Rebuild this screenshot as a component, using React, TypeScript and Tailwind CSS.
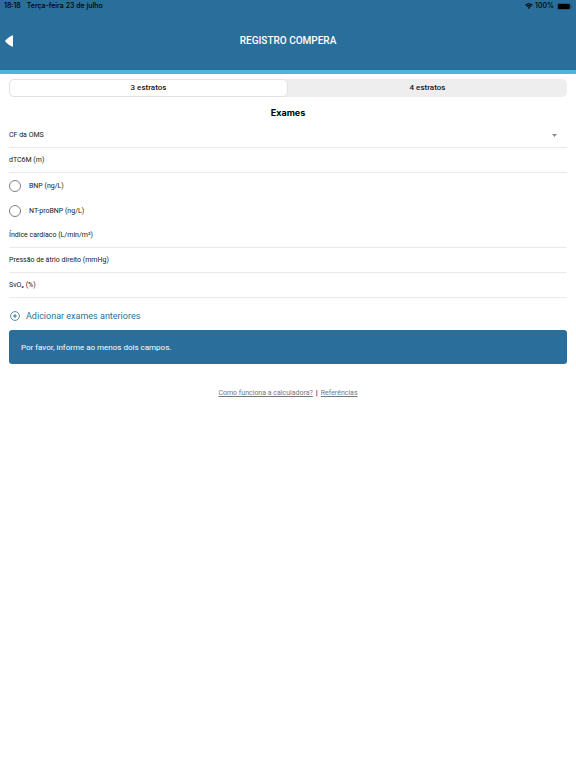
import React from "react";

function StatusBar() {
  return (
    <div className="flex h-3 items-center justify-between px-1 font-['Inter','Liberation_Sans',sans-serif] text-[7px] leading-3 font-medium text-black">
      <div className="flex gap-[6px]">
        <span>18:18</span>
        <span>Terça-feira 23 de julho</span>
      </div>
      <div className="flex items-center gap-[2px]">
        <svg className="h-[6px] w-2" viewBox="0 0 16 12" fill="none" stroke="currentColor" strokeWidth="2.2" aria-hidden="true">
          <path d="M1 4.6C5 .6 11 .6 15 4.6" />
          <path d="M3.8 7.4C6.3 5 9.7 5 12.2 7.4" />
          <path d="M5.6 9.2C7 8 9 8 10.4 9.2L8 11.8Z" fill="currentColor" stroke="none" />
        </svg>
        <span>100%</span>
        <svg className="ml-px h-[7px] w-[15px]" viewBox="0 0 15 7" aria-hidden="true">
          <rect x=".3" y=".3" width="13.2" height="6.4" rx="1.8" fill="none" stroke="#000" strokeOpacity=".45" strokeWidth=".5" />
          <rect x="1" y="1" width="11.8" height="5" rx="1.1" />
          <path d="M14.1 2.4C15 2.7 15 4.3 14.1 4.6Z" fillOpacity=".5" />
        </svg>
      </div>
    </div>
  );
}

function Field({ id, label }: { id: string; label: string }) {
  return (
    <div className="flex h-[25px] items-center gap-2 border-b border-[#e9e9e9]">
      <label htmlFor={id}>{label}</label>
      <input id={id} type="text" className="min-w-0 flex-1 bg-transparent outline-none" />
    </div>
  );
}

function Choice({ label }: { label: string }) {
  return (
    <label className="flex h-[25px] items-center gap-2">
      <input
        type="radio"
        name="peptideo"
        className="h-3 w-3 appearance-none rounded-full border border-[#808080] checked:bg-[#2a6f9b]"
      />
      <span>{label}</span>
    </label>
  );
}

export default function App() {
  return (
    <div className="min-h-screen bg-white font-['Roboto','Liberation_Sans',sans-serif] text-[#171717]">
      <header className="border-b-4 border-[#45b9d9] bg-[#2a6f9b]">
        <StatusBar />
        <div className="grid h-[58px] grid-cols-[1fr_auto_1fr] items-center px-[5px]">
          <button type="button" aria-label="Voltar" className="justify-self-start text-white">
            <svg className="block h-3 w-2" viewBox="0 0 8 12" fill="currentColor" aria-hidden="true">
              <path d="M7 .4Q8 0 8 1V11Q8 12 7 11.6Q4 10.5 .7 7Q-.3 6 .7 5Q4 1.5 7 .4Z" />
            </svg>
          </button>
          <h1 className="text-[10px] leading-4 font-medium text-white">REGISTRO COMPERA</h1>
        </div>
      </header>

      <main className="px-[9px] pt-[5px]">
        <div className="grid h-[18px] grid-cols-2 rounded-[5px] bg-[#eeeeee] text-[8px] font-medium">
          <button type="button" aria-pressed="true" className="rounded-[5px] border border-[#e2e2e2] bg-white">
            3 estratos
          </button>
          <button type="button" aria-pressed="false">4 estratos</button>
        </div>

        <h2 className="pt-2 pb-[3px] text-center font-['Inter','Liberation_Sans',sans-serif] text-[9px] leading-[15px] font-bold text-black">
          Exames
        </h2>

        <form className="text-[7px] leading-3">
          <div className="flex h-[25px] items-center border-b border-[#e9e9e9] pr-[10px]">
            <select aria-label="CF da OMS" className="min-w-0 flex-1 appearance-none bg-transparent outline-none">
              <option>CF da OMS</option>
            </select>
            <svg className="h-[3px] w-[5px] text-[#8b8b8b]" viewBox="0 0 5 3" fill="currentColor" aria-hidden="true">
              <path d="M0 0H5L2.5 3Z" />
            </svg>
          </div>
          <Field id="dtc6m" label="dTC6M (m)" />
          <Choice label="BNP (ng/L)" />
          <Choice label="NT-proBNP (ng/L)" />
          <Field id="indice" label="Índice cardíaco (L/min/m²)" />
          <Field id="pressao" label="Pressão de átrio direito (mmHg)" />
          <Field id="svo2" label="SvO₂ (%)" />
        </form>

        <button type="button" className="mt-[10px] flex h-4 items-center gap-[6px] pl-px text-[9px] text-[#2a6f9b]">
          <svg className="h-[10px] w-[10px]" viewBox="0 0 10 10" fill="none" stroke="currentColor" aria-hidden="true">
            <circle cx="5" cy="5" r="4.4" strokeWidth=".8" />
            <path d="M5 3.2V6.8M3.2 5H6.8" strokeWidth="1" />
          </svg>
          <span className="pt-px">Adicionar exames anteriores</span>
        </button>

        <p className="mt-[6px] rounded-[3px] bg-[#2a6f9b] px-3 pt-[10px] pb-2 text-[8px] leading-4 text-white">
          Por favor, informe ao menos dois campos.
        </p>

        <nav className="mt-6 flex items-center justify-center gap-[3px] text-[7px] leading-[10px] text-[#777777]">
          <a href="#calculadora" className="underline">Como funciona a calculadora?</a>
          <span className="text-[8px] text-black">|</span>
          <a href="#referencias" className="underline">Referências</a>
        </nav>
      </main>
    </div>
  );
}
